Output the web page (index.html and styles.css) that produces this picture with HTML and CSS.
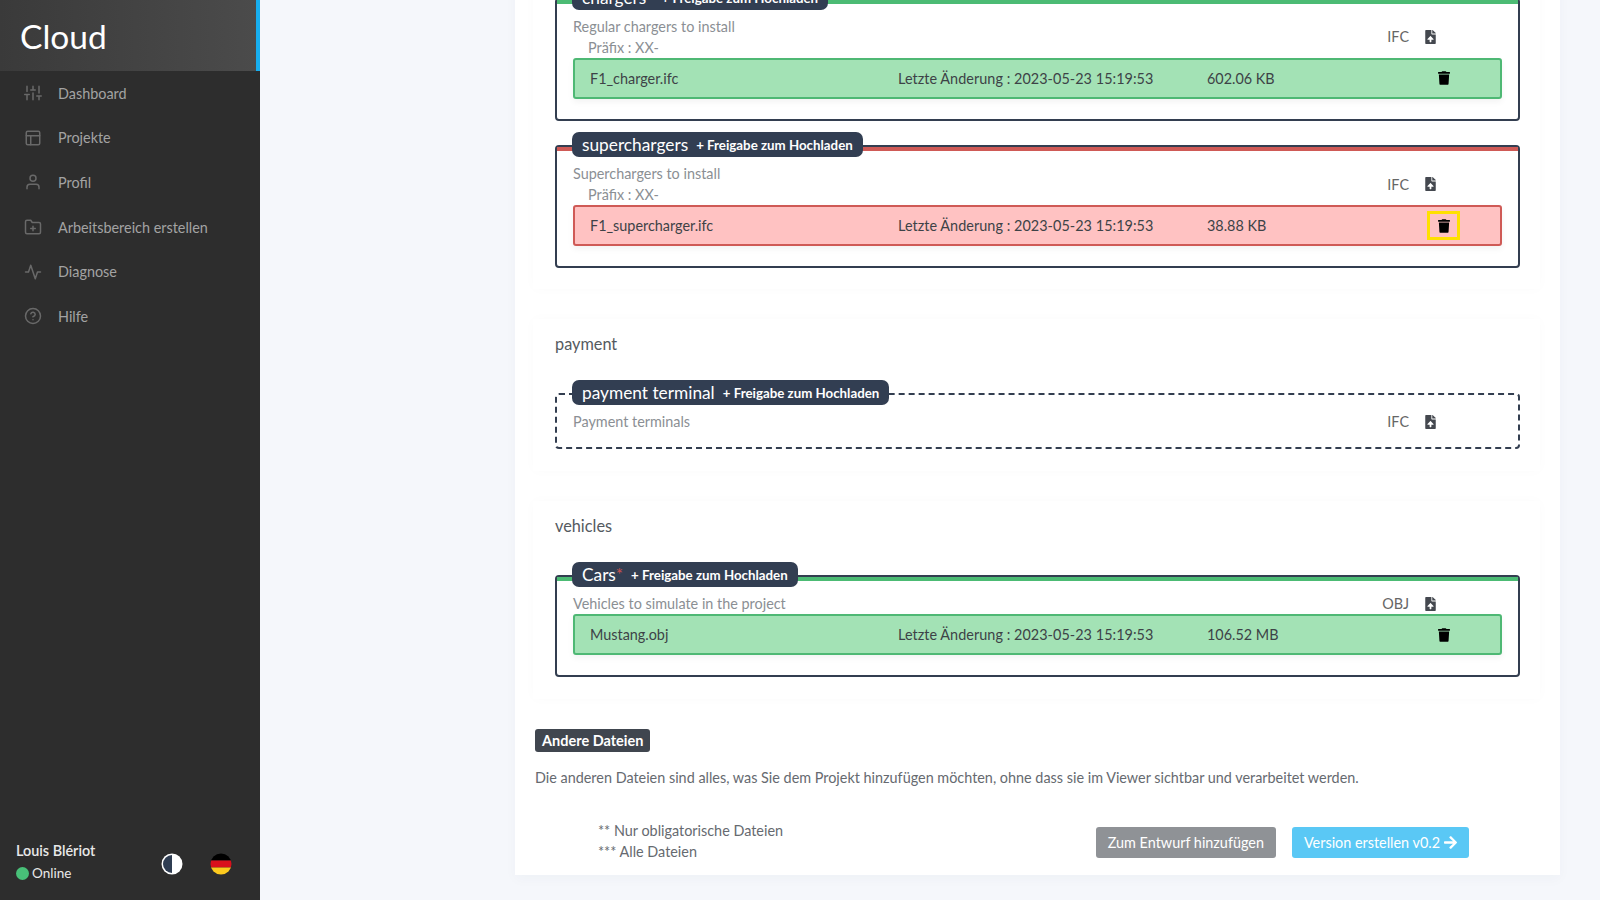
FILE: index.html
```html
<!DOCTYPE html>
<html lang="de">
<head>
<meta charset="utf-8">
<title>Cloud</title>
<link rel="stylesheet" href="styles.css">
</head>
<body>
<svg class="defs" aria-hidden="true">
  <symbol id="i-upload" viewBox="0 0 384 512"><path fill="currentColor" d="M224 136V0H24C10.7 0 0 10.7 0 24v464c0 13.3 10.7 24 24 24h336c13.3 0 24-10.7 24-24V160H248c-13.2 0-24-10.8-24-24zm65.18 216.01H224v80c0 8.84-7.16 16-16 16h-32c-8.84 0-16-7.16-16-16v-80H94.82c-14.28 0-21.41-17.29-11.27-27.36l96.42-95.7c6.65-6.61 17.39-6.61 24.04 0l96.42 95.7c10.15 10.07 3.03 27.36-11.25 27.36zM377 105L279.1 7c-4.5-4.5-10.6-7-17-7H256v128h128v-6.1c0-6.3-2.5-12.4-7-16.9z"/></symbol>
  <symbol id="i-trash" viewBox="0 0 448 512"><path fill="currentColor" d="M432 32H312l-9.4-18.7A24 24 0 0 0 281.1 0H166.8a23.72 23.72 0 0 0-21.4 13.3L136 32H16A16 16 0 0 0 0 48v32a16 16 0 0 0 16 16h416a16 16 0 0 0 16-16V48a16 16 0 0 0-16-16zM53.2 467a48 48 0 0 0 47.9 45h245.8a48 48 0 0 0 47.9-45L416 128H32z"/></symbol>
</svg>

<aside class="sidebar">
  <div class="brand">Cloud</div>
  <nav class="menu">
    <a class="menu-item"><svg class="menu-icon" viewBox="0 0 24 24"><path d="M4 21v-7M4 10V3M12 21v-9M12 8V3M20 21v-5M20 12V3M1 14h6M9 8h6M17 16h6"/></svg>Dashboard</a>
    <a class="menu-item"><svg class="menu-icon" viewBox="0 0 24 24"><rect x="3" y="3" width="18" height="18" rx="2"/><path d="M3 9h18M9 21V9"/></svg>Projekte</a>
    <a class="menu-item"><svg class="menu-icon" viewBox="0 0 24 24"><path d="M20 21v-2a4 4 0 0 0-4-4H8a4 4 0 0 0-4 4v2"/><circle cx="12" cy="7" r="4"/></svg>Profil</a>
    <a class="menu-item"><svg class="menu-icon" viewBox="0 0 24 24"><path d="M22 19a2 2 0 0 1-2 2H4a2 2 0 0 1-2-2V5a2 2 0 0 1 2-2h5l2 3h9a2 2 0 0 1 2 2z"/><path d="M12 11v6M9 14h6"/></svg>Arbeitsbereich erstellen</a>
    <a class="menu-item"><svg class="menu-icon" viewBox="0 0 24 24"><path d="M22 12h-4l-3 9L9 3l-3 9H2"/></svg>Diagnose</a>
    <a class="menu-item"><svg class="menu-icon" viewBox="0 0 24 24"><circle cx="12" cy="12" r="10"/><path d="M9.09 9a3 3 0 0 1 5.83 1c0 2-3 3-3 3M12 17h.01"/></svg>Hilfe</a>
  </nav>
  <div class="user">
    <div class="user-info">
      <div class="user-name">Louis Blériot</div>
      <div class="user-status"><span class="dot"></span>Online</div>
    </div>
    <svg class="round-icon theme" viewBox="0 0 22 22"><circle cx="11" cy="11" r="10.5" fill="#fff"/><path d="M11 2a9 9 0 0 0 0 18z" fill="#2f3d52"/></svg>
    <svg class="round-icon flag" viewBox="0 0 22 22"><defs><clipPath id="flag-clip"><circle cx="11" cy="11" r="10.5"/></clipPath></defs><g clip-path="url(#flag-clip)"><rect width="22" height="7.5" fill="#000"/><rect y="7.5" width="22" height="7" fill="#d9101c"/><rect y="14.5" width="22" height="7.5" fill="#fcca1e"/></g></svg>
  </div>
</aside>

<main class="main">
  <div class="card">
    <section class="panel">
      <div class="box box-green">
        <div class="pill"><span class="pill-title">chargers<span class="req">*</span></span><span class="pill-sub">+ Freigabe zum Hochladen</span></div>
        <div class="bar"></div>
        <div class="box-body">
          <div class="info">
            <div class="info-text"><div>Regular chargers to install</div><div class="prefix">Präfix : XX-</div></div>
            <div class="ftype">IFC</div>
            <svg class="upload"><use href="#i-upload"/></svg>
          </div>
          <div class="file file-green">
            <span class="fname">F1_charger.ifc</span><span class="fdate">Letzte Änderung : 2023-05-23 15:19:53</span><span class="fsize">602.06 KB</span>
            <span class="trash"><svg class="trash-icon"><use href="#i-trash"/></svg></span>
          </div>
        </div>
      </div>
      <div class="box box-red">
        <div class="pill"><span class="pill-title">superchargers</span><span class="pill-sub">+ Freigabe zum Hochladen</span></div>
        <div class="bar"></div>
        <div class="box-body">
          <div class="info">
            <div class="info-text"><div>Superchargers to install</div><div class="prefix">Präfix : XX-</div></div>
            <div class="ftype">IFC</div>
            <svg class="upload"><use href="#i-upload"/></svg>
          </div>
          <div class="file file-red">
            <span class="fname">F1_supercharger.ifc</span><span class="fdate">Letzte Änderung : 2023-05-23 15:19:53</span><span class="fsize">38.88 KB</span>
            <span class="trash trash-focus"><svg class="trash-icon"><use href="#i-trash"/></svg></span>
          </div>
        </div>
      </div>
    </section>

    <section class="panel">
      <h3 class="panel-title">payment</h3>
      <div class="box box-dashed">
        <div class="pill"><span class="pill-title">payment terminal</span><span class="pill-sub">+ Freigabe zum Hochladen</span></div>
        <div class="bar"></div>
        <div class="box-body">
          <div class="info">
            <div class="info-text"><div>Payment terminals</div></div>
            <div class="ftype">IFC</div>
            <svg class="upload"><use href="#i-upload"/></svg>
          </div>
        </div>
      </div>
    </section>

    <section class="panel panel-last">
      <h3 class="panel-title">vehicles</h3>
      <div class="box box-green">
        <div class="pill"><span class="pill-title">Cars<span class="req">*</span></span><span class="pill-sub">+ Freigabe zum Hochladen</span></div>
        <div class="bar"></div>
        <div class="box-body">
          <div class="info">
            <div class="info-text"><div>Vehicles to simulate in the project</div></div>
            <div class="ftype">OBJ</div>
            <svg class="upload"><use href="#i-upload"/></svg>
          </div>
          <div class="file file-green">
            <span class="fname">Mustang.obj</span><span class="fdate">Letzte Änderung : 2023-05-23 15:19:53</span><span class="fsize">106.52 MB</span>
            <span class="trash"><svg class="trash-icon"><use href="#i-trash"/></svg></span>
          </div>
        </div>
      </div>
    </section>

    <div class="others">
      <span class="badge">Andere Dateien</span>
      <p class="others-text">Die anderen Dateien sind alles, was Sie dem Projekt hinzufügen möchten, ohne dass sie im Viewer sichtbar und verarbeitet werden.</p>
      <div class="actions">
        <div class="notes"><div>** Nur obligatorische Dateien</div><div>*** Alle Dateien</div></div>
        <div class="buttons">
          <a class="btn btn-grey">Zum Entwurf hinzufügen</a>
          <a class="btn btn-blue">Version erstellen v0.2 <svg class="arrow" viewBox="0 0 448 512"><path fill="currentColor" d="M190.5 66.9l22.2-22.2c9.4-9.4 24.6-9.4 33.9 0L441 239c9.4 9.4 9.4 24.6 0 33.9L246.6 467.3c-9.4 9.4-24.6 9.4-33.9 0l-22.2-22.2c-9.5-9.5-9.3-25 .4-34.3L311.4 296H24c-13.3 0-24-10.7-24-24v-32c0-13.3 10.7-24 24-24h287.4L190.9 101.2c-9.8-9.3-10-24.8-.4-34.3z"/></svg></a>
        </div>
      </div>
    </div>
  </div>
</main>
</body>
</html>
```

FILE: styles.css
```css
* { box-sizing: border-box; }
html, body { height: 100%; }
body {
  margin: 0;
  display: flex;
  height: 100vh;
  overflow: hidden;
  background: #f5f7fb;
  font-family: "Lato", "Open Sans", sans-serif;
  font-size: 14.4px;
  line-height: 21px;
  color: #555a60;
}
.defs { display: none; }

/* Sidebar */
.sidebar {
  width: 260px;
  flex: none;
  display: flex;
  flex-direction: column;
  background: #2d2d2d;
}
.brand {
  height: 71px;
  flex: none;
  display: flex;
  align-items: center;
  padding: 2px 0 0 20px;
  font-size: 33.5px;
  color: #fff;
  background: linear-gradient(90deg, #3a3a3a, #4b4b4b);
  border-right: 4px solid #16aeef;
}
.menu { display: flex; flex-direction: column; }
.menu-item {
  height: 44.6px;
  display: flex;
  align-items: center;
  gap: 16px;
  padding-left: 24px;
  color: #a3a3a3;
}
.menu-icon {
  width: 18px;
  height: 18px;
  flex: none;
  fill: none;
  stroke: #696969;
  stroke-width: 2;
  stroke-linecap: round;
  stroke-linejoin: round;
}
.user {
  margin-top: auto;
  height: 62px;
  margin-bottom: 7px;
  display: flex;
  align-items: center;
  padding-left: 16px;
  color: #e8e8e8;
}
.user-info { width: 145px; }
.user-name { font-weight: 600; line-height: 23px; }
.user-status { display: flex; align-items: center; gap: 3px; font-size: 13.5px; line-height: 23px; }
.dot { width: 13px; height: 13px; border-radius: 50%; background: #48c078; }
.round-icon { width: 22px; height: 22px; flex: none; margin-top: 4px; }
.theme { margin-right: 27px; }

/* Main */
.main {
  flex: 1;
  min-width: 0;
  display: flex;
  flex-direction: column;
  justify-content: flex-end;
  overflow: hidden;
  padding: 0 40px 25px 255px;
}
.card {
  flex: none;
  background: #fff;
  padding: 0 20px 13px;
  box-shadow: 0 4px 12px rgba(40, 60, 90, .03);
}
.panel {
  margin-left: -2px;
  padding: 14px 20px 22px 22px;
  margin-bottom: 29.5px;
  box-shadow: 0 0 12px rgba(40, 60, 90, .018);
}
.panel:first-child { padding-bottom: 21px; }
.panel-last { margin-bottom: 30px; }
.panel-title {
  margin: 0 0 38.5px;
  font-size: 16.3px;
  line-height: 22px;
  font-weight: 400;
  color: #555a60;
}

/* Boxes */
.box {
  position: relative;
  border: 2px solid #333e50;
  border-radius: 4px;
  margin-bottom: 24.5px;
}
.box:last-child { margin-bottom: 0; }
.box-dashed { border-style: dashed; }
.bar { height: 4px; }
.box-green .bar { background: #4cbb74; }
.box-red .bar { background: #cf5a56; }
.box-body { padding: 12px 16px 15px; }
.pill {
  position: absolute;
  left: 15px;
  top: -15px;
  height: 25px;
  display: flex;
  align-items: center;
  gap: 8px;
  padding: 0 10px;
  border-radius: 7px;
  background: #323e52;
  color: #fff;
  white-space: nowrap;
}
.pill-title { font-size: 17.3px; font-weight: 400; }
.pill-sub { font-size: 13.3px; font-weight: 700; margin-top: 2px; }
.req { color: #c9524e; }
.info { display: flex; align-items: center; color: #8b8f94; }
.info-text { flex: 1; }
.prefix { padding-left: 15px; }
.ftype { color: #666; margin-right: 16px; }
.upload { width: 11px; height: 14px; margin-right: 66px; color: #44484f; }

/* File rows */
.file {
  height: 41px;
  margin-bottom: 5px;
  display: flex;
  align-items: center;
  padding-left: 15px;
  border: 2px solid;
  border-radius: 3px;
  color: #3d4247;
  box-shadow: 0 3px 6px rgba(0, 0, 0, .05);
}
.file-green { background: #a3e2b5; border-color: #4eb874; }
.file-red { background: #ffc2c2; border-color: #cf5a56; }
.fname { width: 308px; }
.fdate { width: 309px; letter-spacing: .05px; }
.fsize { width: 220px; }
.trash {
  width: 33px;
  height: 29px;
  display: flex;
  align-items: center;
  justify-content: center;
  color: #000;
}
.trash-focus { border: 3px solid #ffe000; }
.trash-icon { width: 12px; height: 14px; }

/* Others */
.badge {
  display: inline-block;
  height: 23px;
  padding: 0 7px;
  border-radius: 3px;
  background: #40464f;
  color: #fff;
  font-weight: 700;
  font-size: 14.5px;
  line-height: 23px;
  vertical-align: top;
}
.others-text { margin: 15px 0 0; color: #666a70; }
.actions { display: flex; align-items: center; margin-top: 32px; }
.notes { padding-left: 63px; color: #666a70; }
.buttons { margin: 3px 71px 0 auto; display: flex; gap: 16px; }
.btn {
  height: 31px;
  display: flex;
  align-items: center;
  gap: 4px;
  padding: 0 12px;
  border-radius: 3px;
  color: #fff;
}
.btn-grey { background: #8f9296; }
.btn-blue { background: #5ac8f5; }
.arrow { width: 13px; height: 15px; }
```
